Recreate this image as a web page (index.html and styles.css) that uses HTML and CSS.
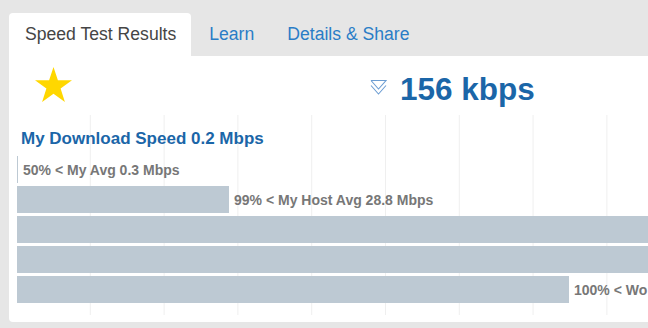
FILE: index.html
```html
<!DOCTYPE html>
<html lang="en">
<head>
    <meta charset="UTF-8">
    <meta name="viewport" content="width=device-width, initial-scale=1.0">
    <title>Speed Test Results</title>
    <link rel="stylesheet" href="styles.css">
</head>
<body>

    <div class="page">
        <ul class="tabs">
            <li class="tab active">Speed Test Results</li>
            <li class="tab">Learn</li>
            <li class="tab">Details &amp; Share</li>
        </ul>

        <div class="panel">
            <div class="header">
                <div class="star-cell">
                    <svg class="star" width="37" height="36" viewBox="0 0 37 36">
                        <polygon points="18.5,0 22.9,13.2 37,13.2 25.6,21.6 29.9,35 18.5,26.8 7.1,35 11.4,21.6 0,13.2 14.1,13.2" fill="#ffd700"/>
                    </svg>
                </div>
                <div class="speed">
                    <svg class="arrow" width="17" height="15" viewBox="0 0 17 15">
                        <polyline points="1,0.5 16,0.5 8.5,9 1,0.5" fill="none" stroke="#6c9dd2" stroke-width="1.1"/>
                        <polyline points="1,5.5 8.5,14 16,5.5" fill="none" stroke="#6c9dd2" stroke-width="1.1"/>
                    </svg>
                    <span class="speed-value">156 kbps</span>
                </div>
            </div>

            <div class="chart">
                <div class="chart-title">My Download Speed 0.2 Mbps</div>

                <div class="row">
                    <div class="bar" style="width: 1px"></div>
                    <span class="label">50% &lt; My Avg 0.3 Mbps</span>
                </div>
                <div class="row">
                    <div class="bar" style="width: 212px"></div>
                    <span class="label">99% &lt; My Host Avg 28.8 Mbps</span>
                </div>
                <div class="row">
                    <div class="bar" style="width: 900px"></div>
                </div>
                <div class="row">
                    <div class="bar" style="width: 900px"></div>
                </div>
                <div class="row">
                    <div class="bar" style="width: 552px"></div>
                    <span class="label">100% &lt; Wo</span>
                </div>
            </div>
        </div>
    </div>

</body>
</html>
```

FILE: styles.css
```css
* {
    box-sizing: border-box;
    margin: 0;
    padding: 0;
}

body {
    font-family: "Liberation Sans", Arial, sans-serif;
    background-color: #e6e6e6;
    overflow: hidden;
    height: 328px;
}

.page {
    padding: 13px 0 0 9px;
    width: 1000px;
}

.tabs {
    list-style: none;
    display: flex;
}

.tab {
    padding: 9px 15px 9px 16px;
    margin-right: 2px;
    font-size: 17.6px;
    line-height: 25px;
    color: #2a7dc6;
    border-radius: 4px 4px 0 0;
}

.tab.active {
    background-color: white;
    color: #454545;
}

.panel {
    background-color: white;
    height: 266px;
    border-radius: 0 0 0 4px;
}

.header {
    display: flex;
    align-items: flex-start;
    height: 59px;
    padding-top: 11px;
}

.star-cell {
    width: 361px;
    padding-left: 26px;
}

.star {
    display: block;
}

.speed {
    display: flex;
    align-items: flex-start;
    margin-top: 4px;
}

.arrow {
    margin-top: 9px;
    margin-right: 13px;
}

.speed-value {
    font-size: 31.5px;
    line-height: 36px;
    font-weight: bold;
    color: #1b66a8;
}

.chart {
    margin-left: 8px;
    height: 200px;
    padding-top: 14px;
    background-image: repeating-linear-gradient(to right, transparent 0, transparent 73px, #efefef 73px, #efefef 74px);
    background-size: 73.8px 100%;
}

.chart-title {
    margin-left: 4px;
    margin-bottom: 7px;
    font-size: 17px;
    line-height: 20px;
    font-weight: bold;
    color: #1b66a8;
}

.row {
    display: flex;
    align-items: center;
    height: 27px;
    margin-bottom: 3px;
    white-space: nowrap;
}

.bar {
    height: 27px;
    flex-shrink: 0;
    background-color: #bdc9d3;
}

.label {
    margin-left: 5px;
    font-size: 14px;
    font-weight: bold;
    color: #777;
}
```
